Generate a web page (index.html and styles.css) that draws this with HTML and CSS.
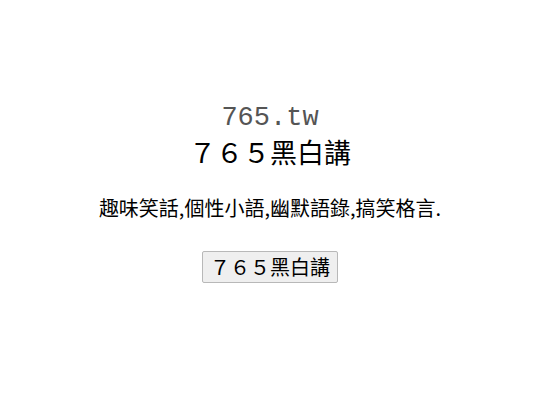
FILE: index.html
```html
<!DOCTYPE html>
<html lang="zh-Hant">
<head>
<meta charset="utf-8">
<title>765.tw</title>
<link rel="stylesheet" href="styles.css">
</head>
<body>
<main class="page">
  <div class="domain">765.tw</div>
  <h1 class="title">７６５黑白講</h1>
  <p class="tagline">趣味笑話,個性小語,幽默語錄,搞笑格言.</p>
  <button class="btn" type="button">７６５黑白講</button>
</main>
</body>
</html>
```
FILE: styles.css
```css
html, body {
  margin: 0;
  padding: 0;
  background: #ffffff;
}
.page {
  display: flex;
  flex-direction: column;
  align-items: center;
  padding-top: 102px;
  font-family: "Noto Sans CJK TC", "Noto Sans CJK SC", sans-serif;
  color: #000;
}
.domain {
  font-family: "Liberation Mono", monospace;
  font-size: 27px;
  line-height: 33px;
  color: #555;
}
.title {
  margin: -3px 0 0;
  font-weight: normal;
  font-size: 27px;
  line-height: 40px;
}
.tagline {
  margin: 21px 0 0;
  font-size: 20px;
  line-height: 30px;
}
.btn {
  margin-top: 28px;
  font-family: "Noto Sans CJK TC", sans-serif;
  font-size: 20px;
  line-height: 28px;
  padding: 1px 7px;
  height: 32px;
  background: #efefef;
  border: 1px solid #b8b8b8;
  border-radius: 2px;
  color: #000;
}
```
